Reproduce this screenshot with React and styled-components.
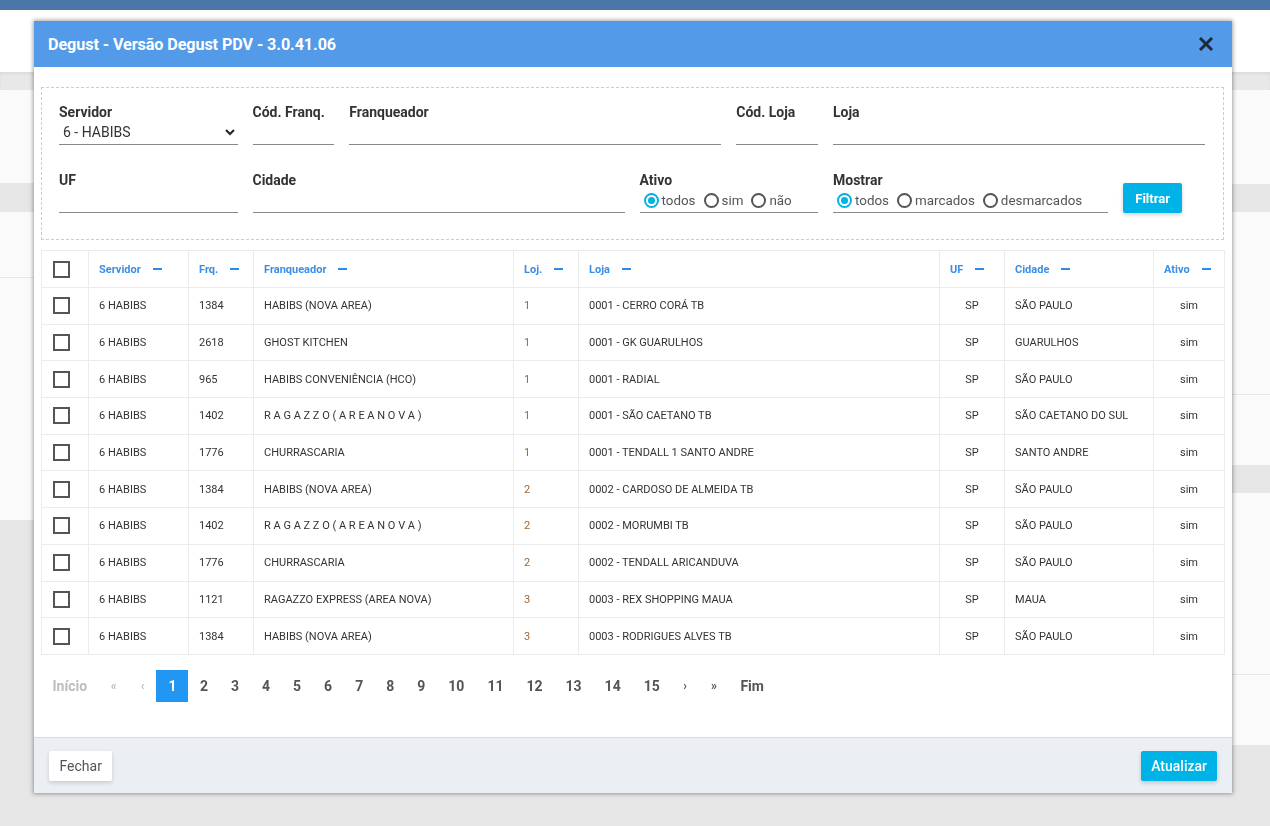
import React, { useState } from 'react';
import styled, { createGlobalStyle } from 'styled-components';

const GlobalStyle = createGlobalStyle`
  html, body {
    margin: 0;
    padding: 0;
    background: #e6e6e6;
    font-family: Roboto, 'Liberation Sans', Arial, sans-serif;
  }
  * { box-sizing: border-box; }
`;

const rows = [
  ['6 HABIBS', '1384', 'HABIBS (NOVA AREA)', '1', '0001 - CERRO CORÁ TB', 'SP', 'SÃO PAULO', 'sim'],
  ['6 HABIBS', '2618', 'GHOST KITCHEN', '1', '0001 - GK GUARULHOS', 'SP', 'GUARULHOS', 'sim'],
  ['6 HABIBS', '965', 'HABIBS CONVENIÊNCIA (HCO)', '1', '0001 - RADIAL', 'SP', 'SÃO PAULO', 'sim'],
  ['6 HABIBS', '1402', 'R A G A Z Z O ( A R E A N O V A )', '1', '0001 - SÃO CAETANO TB', 'SP', 'SÃO CAETANO DO SUL', 'sim'],
  ['6 HABIBS', '1776', 'CHURRASCARIA', '1', '0001 - TENDALL 1 SANTO ANDRE', 'SP', 'SANTO ANDRE', 'sim'],
  ['6 HABIBS', '1384', 'HABIBS (NOVA AREA)', '2', '0002 - CARDOSO DE ALMEIDA TB', 'SP', 'SÃO PAULO', 'sim'],
  ['6 HABIBS', '1402', 'R A G A Z Z O ( A R E A N O V A )', '2', '0002 - MORUMBI TB', 'SP', 'SÃO PAULO', 'sim'],
  ['6 HABIBS', '1776', 'CHURRASCARIA', '2', '0002 - TENDALL ARICANDUVA', 'SP', 'SÃO PAULO', 'sim'],
  ['6 HABIBS', '1121', 'RAGAZZO EXPRESS (AREA NOVA)', '3', '0003 - REX SHOPPING MAUA', 'SP', 'MAUA', 'sim'],
  ['6 HABIBS', '1384', 'HABIBS (NOVA AREA)', '3', '0003 - RODRIGUES ALVES TB', 'SP', 'SÃO PAULO', 'sim'],
];

const columns = [
  { key: 'servidor', label: 'Servidor', width: 100 },
  { key: 'frq', label: 'Frq.', width: 65 },
  { key: 'franq', label: 'Franqueador', width: 260 },
  { key: 'loj', label: 'Loj.', width: 65 },
  { key: 'loja', label: 'Loja', width: 361 },
  { key: 'uf', label: 'UF', width: 65, center: true },
  { key: 'cidade', label: 'Cidade', width: 149 },
  { key: 'ativo', label: 'Ativo', width: 71, center: true },
];

function App() {
  const [ativo, setAtivo] = useState('todos');
  const [mostrar, setMostrar] = useState('todos');
  const [page, setPage] = useState(1);

  return (
    <>
      <GlobalStyle />
      <Backdrop>
        <TopBar />
        <HeaderStrip />
        <Shelf />
        <BackColumns>
          <BackColumn>
            <BackBlock $h={93} />
            <BackBand $h={29} />
            <BackBlock $h={66} $line />
            <BackBlock $h={242} />
          </BackColumn>
          <BackColumn>
            <BackBlock $h={94} />
            <BackBand $h={28} />
            <BackBlock $h={183} $line />
            <BackBlock $h={70} />
            <BackBand $h={28} />
            <BackBlock $h={182} $line />
            <BackBlock $h={70} />
          </BackColumn>
        </BackColumns>
      </Backdrop>

      <Modal>
        <ModalHeader>
          <ModalTitle>Degust - Versão Degust PDV - 3.0.41.06</ModalTitle>
          <CloseButton aria-label="fechar">
            <svg width="14" height="14" viewBox="0 0 14 14">
              <path d="M2 2 L12 12 M12 2 L2 12" stroke="#1f2b3a" strokeWidth="3" strokeLinecap="square" />
            </svg>
          </CloseButton>
        </ModalHeader>

        <ModalBody>
          <FilterBox>
            <Field $span={2}>
              <FieldLabel>Servidor</FieldLabel>
              <SelectWrap>
                <Select defaultValue="6">
                  <option value="6">6 - HABIBS</option>
                </Select>
                <svg width="12" height="12" viewBox="0 0 12 12">
                  <path d="M2 4 L6 8 L10 4" fill="none" stroke="#222" strokeWidth="2" />
                </svg>
              </SelectWrap>
            </Field>
            <Field $span={1}>
              <FieldLabel>Cód. Franq.</FieldLabel>
              <TextInput />
            </Field>
            <Field $span={4}>
              <FieldLabel>Franqueador</FieldLabel>
              <TextInput />
            </Field>
            <Field $span={1}>
              <FieldLabel>Cód. Loja</FieldLabel>
              <TextInput />
            </Field>
            <Field $span={4}>
              <FieldLabel>Loja</FieldLabel>
              <TextInput />
            </Field>

            <Field $span={2}>
              <FieldLabel>UF</FieldLabel>
              <TextInput />
            </Field>
            <Field $span={4}>
              <FieldLabel>Cidade</FieldLabel>
              <TextInput />
            </Field>
            <Field $span={2}>
              <FieldLabel>Ativo</FieldLabel>
              <RadioGroup>
                {['todos', 'sim', 'não'].map((o) => (
                  <RadioOption key={o} onClick={() => setAtivo(o)}>
                    <RadioDot $checked={ativo === o} />
                    {o}
                  </RadioOption>
                ))}
              </RadioGroup>
            </Field>
            <Field $span={3}>
              <FieldLabel>Mostrar</FieldLabel>
              <RadioGroup>
                {['todos', 'marcados', 'desmarcados'].map((o) => (
                  <RadioOption key={o} onClick={() => setMostrar(o)}>
                    <RadioDot $checked={mostrar === o} />
                    {o}
                  </RadioOption>
                ))}
              </RadioGroup>
            </Field>
            <ButtonCell $span={1}>
              <PrimaryButton $bold>Filtrar</PrimaryButton>
            </ButtonCell>
          </FilterBox>

          <Table>
            <colgroup>
              <col style={{ width: 47 }} />
              {columns.map((c) => (
                <col key={c.key} style={{ width: c.width }} />
              ))}
            </colgroup>
            <thead>
              <tr>
                <HeadCell $check>
                  <Checkbox />
                </HeadCell>
                {columns.map((c) => (
                  <HeadCell key={c.key}>
                    {c.label}
                    <SortDash />
                  </HeadCell>
                ))}
              </tr>
            </thead>
            <tbody>
              {rows.map((r, i) => (
                <BodyRow key={i}>
                  <Cell $check>
                    <Checkbox />
                  </Cell>
                  {r.map((v, j) => (
                    <Cell key={j} $center={columns[j].center} $accent={columns[j].key === 'loj'}>
                      {v}
                    </Cell>
                  ))}
                </BodyRow>
              ))}
            </tbody>
          </Table>

          <Pagination>
            <PageItem $disabled>Início</PageItem>
            <PageItem $disabled $glyph>«</PageItem>
            <PageItem $disabled $glyph>‹</PageItem>
            {Array.from({ length: 15 }, (_, i) => i + 1).map((n) => (
              <PageItem key={n} $active={page === n} onClick={() => setPage(n)}>
                {n}
              </PageItem>
            ))}
            <PageItem $glyph>›</PageItem>
            <PageItem $glyph>»</PageItem>
            <PageItem>Fim</PageItem>
          </Pagination>
        </ModalBody>

        <ModalFooter>
          <SecondaryButton>Fechar</SecondaryButton>
          <PrimaryButton>Atualizar</PrimaryButton>
        </ModalFooter>
      </Modal>
    </>
  );
}

export default App;

// Styled Components

const Backdrop = styled.div`
  min-height: 826px;
  background: #e6e6e6;
`;

const TopBar = styled.div`
  height: 10px;
  background: #4a76a8;
`;

const HeaderStrip = styled.div`
  height: 62px;
  background: #ffffff;
`;

const Shelf = styled.div`
  height: 18px;
  background: #e8e8e8;
  box-shadow: inset 0 2px 3px rgba(0, 0, 0, 0.06);
`;

const BackColumns = styled.div`
  display: grid;
  grid-template-columns: 1fr 1fr;
  align-items: start;
`;

const BackColumn = styled.div`
  display: flex;
  flex-direction: column;
`;

const BackBlock = styled.div`
  height: ${(p) => p.$h}px;
  background: #fafafa;
  border-bottom: ${(p) => (p.$line ? '1px solid #e6e6e6' : 'none')};
`;

const BackBand = styled.div`
  height: ${(p) => p.$h}px;
  background: #e6e6e6;
`;

const Modal = styled.div`
  position: fixed;
  left: 34px;
  top: 21px;
  width: 1198px;
  height: 772px;
  background: #ffffff;
  display: flex;
  flex-direction: column;
  box-shadow: 0 0 4px 1px rgba(0, 0, 0, 0.35);
`;

const ModalHeader = styled.div`
  height: 46px;
  flex-shrink: 0;
  background: #539ae8;
  display: flex;
  align-items: center;
  justify-content: space-between;
  padding: 0 19px 0 14px;
`;

const ModalTitle = styled.div`
  color: #ffffff;
  font-size: 16.2px;
  font-weight: 700;
  letter-spacing: -0.1px;
`;

const CloseButton = styled.button`
  border: none;
  background: none;
  padding: 0;
  display: flex;
  cursor: pointer;
`;

const ModalBody = styled.div`
  flex: 1;
  padding: 20px 8px 0 7px;
  display: flex;
  flex-direction: column;
`;

const FilterBox = styled.div`
  border: 1px dashed #cccccc;
  padding: 16px 18px 26px 17px;
  display: grid;
  grid-template-columns: repeat(12, 1fr);
  column-gap: 15px;
  row-gap: 27px;
`;

const Field = styled.div`
  grid-column: span ${(p) => p.$span};
  display: flex;
  flex-direction: column;
  min-width: 0;
`;

const ButtonCell = styled.div`
  grid-column: span ${(p) => p.$span};
  display: flex;
  align-items: flex-end;
`;

const FieldLabel = styled.label`
  font-size: 14px;
  font-weight: 700;
  color: #333333;
  line-height: 16px;
`;

const TextInput = styled.input`
  height: 25px;
  border: none;
  border-bottom: 1px solid #888888;
  outline: none;
  background: none;
  font-family: inherit;
  font-size: 14px;
  padding: 0 4px;
`;

const SelectWrap = styled.div`
  height: 25px;
  display: flex;
  align-items: center;
  border-bottom: 1px solid #888888;
  padding-right: 2px;

  svg {
    flex-shrink: 0;
    margin-left: -14px;
    pointer-events: none;
  }
`;

const Select = styled.select`
  flex: 1;
  appearance: none;
  border: none;
  outline: none;
  background: none;
  font-family: inherit;
  font-size: 14px;
  color: #333333;
  padding: 0 4px;
  height: 24px;
`;

const RadioGroup = styled.div`
  height: 25px;
  display: flex;
  align-items: center;
  gap: 8px;
  border-bottom: 1px solid #888888;
  padding-left: 4px;
`;

const RadioOption = styled.span`
  display: flex;
  align-items: center;
  gap: 3px;
  font-size: 13.4px;
  color: #555555;
  cursor: pointer;
`;

const RadioDot = styled.span`
  width: 15px;
  height: 15px;
  border-radius: 50%;
  border: 2px solid ${(p) => (p.$checked ? '#00b3e3' : '#555555')};
  display: flex;
  align-items: center;
  justify-content: center;

  &::after {
    content: '';
    width: 7px;
    height: 7px;
    border-radius: 50%;
    background: ${(p) => (p.$checked ? '#00b3e3' : 'transparent')};
  }
`;

const PrimaryButton = styled.button`
  height: 30px;
  padding: 0 ${(p) => (p.$bold ? '12px' : '10px')};
  border: none;
  border-radius: 2px;
  background: #00b3e6;
  color: #ffffff;
  font-family: inherit;
  font-size: ${(p) => (p.$bold ? '13px' : '14px')};
  font-weight: ${(p) => (p.$bold ? 700 : 500)};
  box-shadow: 0 2px 4px rgba(0, 0, 0, 0.18);
  cursor: pointer;
`;

const SecondaryButton = styled.button`
  height: 30px;
  padding: 0 10.5px;
  border: none;
  border-radius: 2px;
  background: #ffffff;
  color: #555555;
  font-family: inherit;
  font-size: 14px;
  box-shadow: 0 2px 4px rgba(0, 0, 0, 0.15);
  cursor: pointer;
`;

const Table = styled.table`
  margin-top: 10px;
  width: 1183px;
  border-collapse: collapse;
  table-layout: fixed;
  border: 1px solid #ebebeb;
`;

const HeadCell = styled.th`
  height: 37px;
  padding: 0 0 0 ${(p) => (p.$check ? '11px' : '10px')};
  text-align: left;
  border: 1px solid #ebebeb;
  color: #3a8ee8;
  font-size: 11px;
  font-weight: 700;
  white-space: nowrap;
`;

const SortDash = styled.span`
  display: inline-block;
  vertical-align: middle;
  width: 9px;
  height: 2px;
  margin-left: 12px;
  margin-top: -1px;
  background: #2a8be8;
`;

const BodyRow = styled.tr`
  height: 36.7px;
`;

const Cell = styled.td`
  padding: 0 0 0 ${(p) => (p.$check ? '11px' : p.$center ? '0' : '10px')};
  text-align: ${(p) => (p.$center ? 'center' : 'left')};
  border: 1px solid #ebebeb;
  font-size: 11px;
  color: ${(p) => (p.$accent ? '#a0672f' : '#333333')};
  white-space: nowrap;
  overflow: hidden;
`;

const Checkbox = styled.span`
  display: block;
  width: 17px;
  height: 17px;
  border: 2px solid #555555;
`;

const Pagination = styled.div`
  margin-top: 15px;
  display: flex;
  align-items: center;
  height: 32px;
`;

const PageItem = styled.span`
  height: 32px;
  min-width: ${(p) => (p.$active ? '32px' : '0')};
  display: flex;
  align-items: center;
  justify-content: center;
  padding: 0 ${(p) => (p.$glyph ? '12px' : '11.5px')};
  font-size: ${(p) => (p.$glyph ? '12px' : '14px')};
  font-weight: 700;
  color: ${(p) => (p.$active ? '#ffffff' : p.$disabled ? '#bdbdbd' : '#555555')};
  background: ${(p) => (p.$active ? '#2196f3' : 'transparent')};
  cursor: ${(p) => (p.$disabled ? 'default' : 'pointer')};
`;

const ModalFooter = styled.div`
  height: 56px;
  flex-shrink: 0;
  background: #ebeef3;
  border-top: 1px solid #d6dce2;
  display: flex;
  align-items: center;
  justify-content: space-between;
  padding: 0 15px 0 15px;
`;
